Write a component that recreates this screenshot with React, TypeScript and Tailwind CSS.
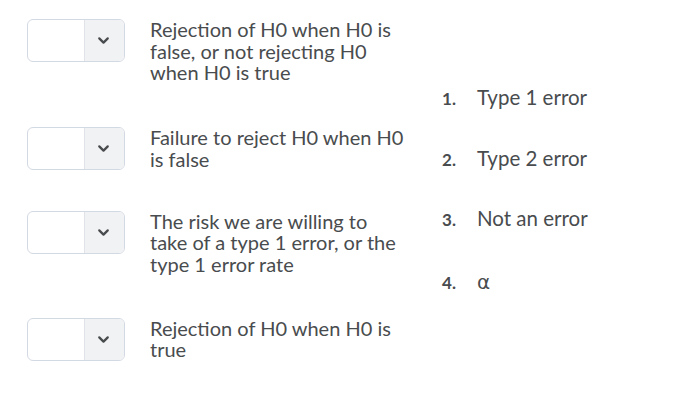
import { ChevronDown } from "lucide-react";

const prompts = [
    { text: "Rejection of H0 when H0 is false, or not rejecting H0 when H0 is true", mt: "mt-[19px]" },
    { text: "Failure to reject H0 when H0 is false", mt: "mt-[43px]" },
    { text: "The risk we are willing to take of a type 1 error, or the type 1 error rate", mt: "mt-[40px]" },
    { text: "Rejection of H0 when H0 is true", mt: "mt-[42px]" },
];

const answers = [
    { label: "Type 1 error", mt: "mt-[87px]" },
    { label: "Type 2 error", mt: "mt-[38px]" },
    { label: "Not an error", mt: "mt-[38px]" },
    { label: "α", mt: "mt-[41px]" },
];

function SelectBox() {
    return (
        <div className="flex w-[98px] h-[43px] shrink-0 rounded-[6px] border border-[#d3d9e3] bg-white overflow-hidden">
            <div className="w-[56px]" />
            <div className="flex-1 flex items-center justify-center bg-[#f1f2f4] border-l border-[#e0e3e8]">
                <ChevronDown size={17} strokeWidth={3.2} className="text-[#494c4e] -ml-[3px]" />
            </div>
        </div>
    );
}

export default function App() {
    return (
        <div className="w-[698px] h-[404px] bg-white text-[#494c4e] font-['Lato',sans-serif] flex">
            {/* Prompts with dropdowns */}
            <div className="flex flex-col pl-[27px]">
                {prompts.map((p) => (
                    <div key={p.text} className={`flex items-start gap-[25px] ${p.mt}`}>
                        <SelectBox />
                        <p className="w-[257px] text-[20px] leading-[21.7px]">{p.text}</p>
                    </div>
                ))}
            </div>

            {/* Answer list */}
            <ol className="flex flex-col ml-[35px]">
                {answers.map((a, i) => (
                    <li key={a.label} className={`flex items-baseline leading-[21.7px] ${a.mt}`}>
                        <span className="w-[35px] text-[17px] leading-[21.7px] font-bold">{i + 1}.</span>
                        <span
                            className={
                                a.label === "α"
                                    ? "text-[20px] leading-[21.7px] font-['DejaVu_Sans',sans-serif]"
                                    : "text-[20.5px] leading-[21.7px]"
                            }
                        >
                            {a.label}
                        </span>
                    </li>
                ))}
            </ol>
        </div>
    );
}
